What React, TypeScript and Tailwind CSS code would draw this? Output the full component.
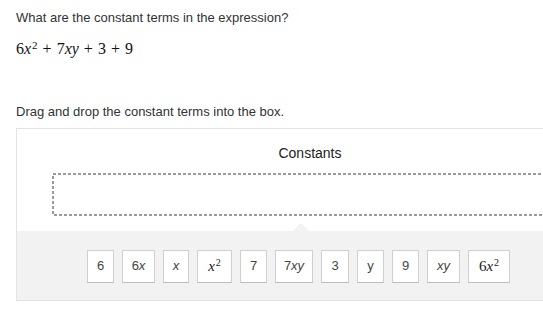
import React from "react";

const serif = "font-['Liberation_Serif','Times_New_Roman',serif]";

function MathX({ pre }: { pre?: string }) {
  return (
    <span className={`${serif} text-[15px] leading-none text-[#222]`}>
      {pre}
      <i>x</i>
      <sup className="text-[10px] ml-[1px]">2</sup>
    </span>
  );
}

type Tile = { w: string; node: React.ReactNode };

const tiles: Tile[] = [
  { w: "w-[27px]", node: <span>6</span> },
  { w: "w-[33px]", node: <span>6<i>x</i></span> },
  { w: "w-[26px]", node: <i>x</i> },
  { w: "w-[35px]", node: <MathX /> },
  { w: "w-[27px]", node: <span>7</span> },
  { w: "w-[38px]", node: <span>7<i>xy</i></span> },
  { w: "w-[28px]", node: <span>3</span> },
  { w: "w-[27px]", node: <span>y</span> },
  { w: "w-[27px]", node: <span>9</span> },
  { w: "w-[33px]", node: <i>xy</i> },
  { w: "w-[42px]", node: <MathX pre="6" /> },
];

export default function App() {
  return (
    <div className="w-[543px] h-[309px] overflow-hidden bg-white text-[#333] font-['Liberation_Sans',Arial,sans-serif]">
      <div className="pl-4 pt-[10px]">
        <p className="text-[13px] leading-[16px]">What are the constant terms in the expression?</p>
        <p className={`${serif} mt-[14px] text-[16px] leading-[18px] text-[#111]`}>
          6<i>x</i>
          <sup className="text-[11px] ml-[1px]">2</sup>
          <span className="mx-[5px]">+</span>7<i>xy</i>
          <span className="mx-[5px]">+</span>3<span className="mx-[5px]">+</span>9
        </p>
        <p className="mt-[46px] text-[13px] leading-[16px]">Drag and drop the constant terms into the box.</p>
      </div>
      <div className="ml-4 mt-[8px] w-[588px] border border-[#e3e3e3] bg-white">
        <div className="pt-[15px] text-center text-[14px] leading-[18px] text-[#222]">Constants</div>
        <div className="ml-[35px] mr-[35px] mt-[11px] h-[43px]">
          <svg className="block w-full h-full" preserveAspectRatio="none">
            <rect x="1" y="1" width="514" height="41" fill="none" stroke="#9a9a9a" strokeWidth="2" strokeDasharray="3 2" />
          </svg>
        </div>
        <div className="relative mt-[15px] h-[69px] bg-[#f2f2f2] flex items-center gap-2 pl-[70px] pt-[1px]">
          <div className="absolute left-[276px] -top-[8px] w-0 h-0 border-l-[8px] border-r-[8px] border-b-[8px] border-l-transparent border-r-transparent border-b-[#f2f2f2]" />
          {tiles.map((t, i) => (
            <div
              key={i}
              className={`${t.w} h-[33px] shrink-0 flex items-center justify-center bg-white border border-[#cfcfcf] border-b-[#bdbdbd] text-[13px] text-[#444]`}
            >
              {t.node}
            </div>
          ))}
        </div>
      </div>
    </div>
  );
}
